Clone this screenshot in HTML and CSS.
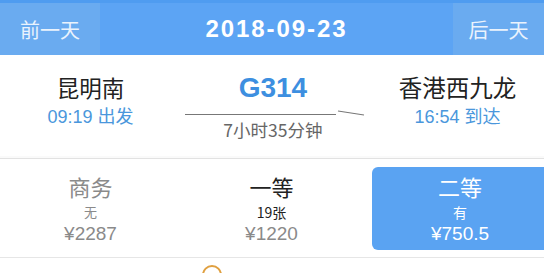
FILE: index.html
```html
<!DOCTYPE html>
<html>
<head>
<meta charset="utf-8">
<link rel="stylesheet" href="styles.css">
</head>
<body>
<div class="page">
  <div class="topstrip"></div>
  <div class="header">
    <div class="navbtn">前一天</div>
    <div class="date">2018-09-23</div>
    <div class="navbtn">后一天</div>
  </div>
  <div class="route">
    <div class="station">
      <div class="name">昆明南</div>
      <div class="time">09:19 出发</div>
    </div>
    <div class="train">
      <div class="code">G314</div>
      <svg class="arrow" width="180" height="8" viewBox="0 0 180 8">
        <line x1="0" y1="6.5" x2="151" y2="6.5" stroke="#777" stroke-width="1.2"/>
        <line x1="153" y1="3" x2="179" y2="7" stroke="#777" stroke-width="1.2"/>
      </svg>
      <div class="dur">7小时35分钟</div>
    </div>
    <div class="station">
      <div class="name">香港西九龙</div>
      <div class="time">16:54 到达</div>
    </div>
  </div>
  <div class="gap"></div>
  <div class="seats">
    <div class="seat off">
      <div class="cls">商务</div>
      <div class="avail">无</div>
      <div class="price">¥2287</div>
    </div>
    <div class="seat">
      <div class="cls">一等</div>
      <div class="avail">19张</div>
      <div class="price">¥1220</div>
    </div>
    <div class="seat sel">
      <div class="cls">二等</div>
      <div class="avail">有</div>
      <div class="price">¥750.5</div>
    </div>
  </div>
  <div class="bottom">
    <div class="ring"></div>
  </div>
</div>
</body>
</html>
```
FILE: styles.css
```css
* { box-sizing: border-box; }
html, body { margin: 0; padding: 0; }
body {
  width: 544px;
  height: 273px;
  overflow: hidden;
  background: #fff;
  font-family: "Noto Sans CJK SC", "Liberation Sans", sans-serif;
}
.page { display: flex; flex-direction: column; }
.topstrip { height: 3px; background: #4f9cf0; }
.header {
  height: 52px;
  background: #5ca4f4;
  display: flex;
  align-items: stretch;
}
.navbtn {
  width: 100px;
  background: #6aabf0;
  color: #eaf3fd;
  font-size: 20px;
  display: flex;
  align-items: center;
  justify-content: center;
}
.navbtn:last-child { width: 91px; }
.date {
  flex: 1;
  color: #fff;
  font-family: "Liberation Sans", "Noto Sans", sans-serif;
  font-weight: bold;
  font-size: 24px;
  letter-spacing: 1.9px;
  display: flex;
  align-items: center;
  justify-content: center;
}
.route {
  height: 101px;
  display: flex;
  align-items: flex-start;
  padding-top: 16px;
}
.station {
  width: 186px;
  display: flex;
  flex-direction: column;
  align-items: center;
}
.station .name {
  font-size: 22.5px;
  line-height: 32px;
  color: #222;
}
.station .time {
  font-size: 18px;
  line-height: 24px;
  margin-top: 2px;
  color: #4a97dc;
  font-family: "Liberation Sans", "Noto Sans CJK SC", sans-serif;
}
.station:last-child { width: 184px; padding-left: 6px; }
.station:last-child .name { font-size: 23.5px; }
.train {
  flex: 1;
  display: flex;
  flex-direction: column;
  align-items: center;
}
.code {
  font-family: "Liberation Sans", sans-serif;
  font-weight: bold;
  font-size: 28px;
  line-height: 34px;
  color: #3d8fe0;
}
.arrow { display: block; margin-top: 3px; margin-left: 4px; }
.dur {
  font-size: 17.5px;
  line-height: 24px;
  color: #666;
  margin-top: 2px;
}
.gap { height: 3px; background: #fafafa; border-bottom: 1px solid #e2e2e2; }
.seats {
  height: 99px;
  display: flex;
  align-items: center;
  border-bottom: 1px solid #e6e6e6;
}
.seat {
  width: 181px;
  height: 83px;
  display: flex;
  flex-direction: column;
  align-items: center;
  justify-content: center;
  color: #222;
}
.seat .cls { font-size: 22px; line-height: 32px; }
.seat .avail { font-size: 14px; line-height: 18px; margin-top: 1px; }
.seat .price {
  font-family: "Liberation Sans", "Noto Sans CJK SC", sans-serif;
  font-size: 19px;
  line-height: 26px;
  color: #8a8a8a;
}
.seat.off .cls, .seat.off .avail { color: #8a8a8a; }
.seat.off .avail { font-size: 13px; }
.seat.sel {
  margin-left: 10px;
  flex: 1;
  background: #5aa3f2;
  border-radius: 6px 0 0 6px;
  color: #fff;
  padding-left: 4px;
}
.seat.sel .price, .seat.sel .avail { color: #fff; }
.bottom {
  flex: 1;
  height: 15px;
  position: relative;
  background: #fff;
}
.ring {
  position: absolute;
  left: 202px;
  top: 7px;
  width: 20px;
  height: 20px;
  border-radius: 50%;
  border: 2px solid #e0a040;
}
```
